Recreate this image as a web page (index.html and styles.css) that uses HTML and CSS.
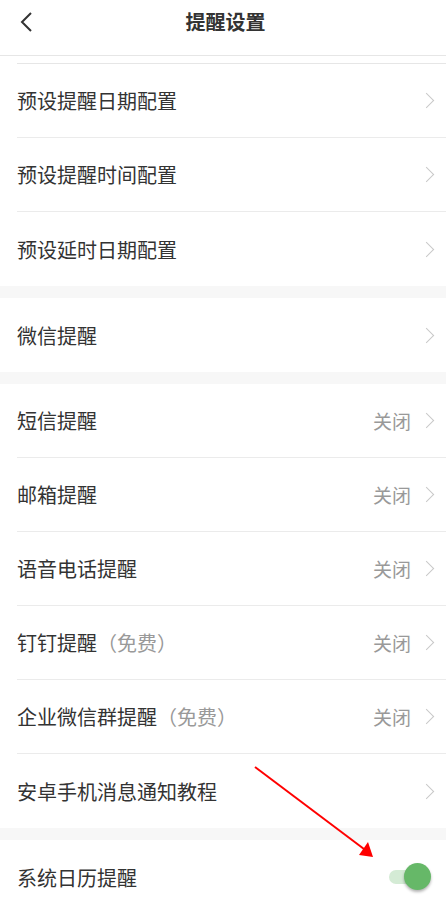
FILE: index.html
```html
<!DOCTYPE html>
<html lang="zh">
<head>
<meta charset="utf-8">
<link rel="stylesheet" href="styles.css">
</head>
<body>
<div class="page">
  <header class="nav">
    <svg class="back" width="14" height="22" viewBox="0 0 14 22"><path d="M11 2 L2 11 L11 20" fill="none" stroke="#333" stroke-width="2"/></svg>
    <div class="title">提醒设置</div>
  </header>
  <div class="group">
    <div class="stub"></div>
    <div class="row"><span class="label">预设提醒日期配置</span><span class="right"><span class="chev"></span></span></div>
    <div class="row"><span class="label">预设提醒时间配置</span><span class="right"><span class="chev"></span></span></div>
    <div class="row"><span class="label">预设延时日期配置</span><span class="right"><span class="chev"></span></span></div>
  </div>
  <div class="group">
    <div class="row"><span class="label">微信提醒</span><span class="right"><span class="chev"></span></span></div>
  </div>
  <div class="group">
    <div class="row"><span class="label">短信提醒</span><span class="right"><span class="val">关闭</span><span class="chev"></span></span></div>
    <div class="row"><span class="label">邮箱提醒</span><span class="right"><span class="val">关闭</span><span class="chev"></span></span></div>
    <div class="row"><span class="label">语音电话提醒</span><span class="right"><span class="val">关闭</span><span class="chev"></span></span></div>
    <div class="row"><span class="label">钉钉提醒<span class="note">（免费）</span></span><span class="right"><span class="val">关闭</span><span class="chev"></span></span></div>
    <div class="row"><span class="label">企业微信群提醒<span class="note">（免费）</span></span><span class="right"><span class="val">关闭</span><span class="chev"></span></span></div>
    <div class="row"><span class="label">安卓手机消息通知教程</span><span class="right"><span class="chev"></span></span></div>
  </div>
  <div class="group">
    <div class="row"><span class="label">系统日历提醒</span><span class="switch"><span class="track"></span><span class="knob"></span></span></div>
  </div>
  <svg class="arrow" width="446" height="910" viewBox="0 0 446 910">
    <line x1="255" y1="767" x2="364" y2="849" stroke="#f00" stroke-width="2"/>
    <polygon points="373,857 359,855 368,842" fill="#f00"/>
  </svg>
</div>
</body>
</html>
```

FILE: styles.css
```css
* { box-sizing: border-box; margin: 0; padding: 0; }
html, body { background: #f7f7f7; }
body {
  margin: 0;
  font-family: "Noto Sans CJK SC", "Noto Sans", sans-serif;
  color: #333;
  overflow: hidden;
}
.page {
  position: relative;
  width: 446px;
  height: 910px;
  overflow: hidden;
  display: flex;
  flex-direction: column;
  gap: 12px;
}
.nav {
  position: relative;
  height: 56px;
  background: #fff;
  border-bottom: 1px solid #e6e6e6;
  display: flex;
  align-items: flex-start;
  justify-content: center;
  flex-shrink: 0;
  margin-bottom: -12px;
}
.back {
  position: absolute;
  left: 20px;
  top: 11px;
}
.title {
  font-size: 20px;
  font-weight: 700;
  line-height: 44px;
  color: #333;
  padding-left: 5px;
}
.group {
  background: #fff;
  display: flex;
  flex-direction: column;
  flex-shrink: 0;
}
.stub {
  height: 8px;
  margin-left: 17px;
  border-bottom: 1px solid #e6e6e6;
}
.row {
  height: 74px;
  margin-left: 17px;
  padding-right: 10px;
  display: flex;
  align-items: center;
  justify-content: space-between;
  border-bottom: 1px solid #ebebeb;
}
.row:last-child { border-bottom: none; height: 74px; }
.label {
  font-size: 20px;
  color: #333;
  line-height: 1;
  padding-top: 1px;
}
.note { color: #999; }
.right {
  display: flex;
  align-items: center;
  gap: 10px;
}
.val {
  font-size: 19px;
  color: #999;
  line-height: 1;
}
.chev {
  width: 11px;
  height: 11px;
  border-top: 1.5px solid #c8c8c8;
  border-right: 1.5px solid #c8c8c8;
  transform: rotate(45deg);
  margin-right: 4px;
}
.switch {
  position: relative;
  width: 42px;
  height: 28px;
  margin-right: 5px;
  display: flex;
  align-items: center;
}
.track {
  width: 38px;
  height: 14px;
  border-radius: 7px;
  background: #d4ebd5;
}
.knob {
  position: absolute;
  right: 0;
  top: 0;
  width: 27px;
  height: 27px;
  border-radius: 50%;
  background: #66b868;
  box-shadow: 0 2px 3px rgba(0,0,0,0.3);
}
.arrow {
  position: absolute;
  left: 0;
  top: 0;
  pointer-events: none;
}
```
